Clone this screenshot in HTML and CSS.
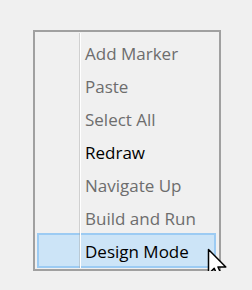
FILE: index.html
```html
<!DOCTYPE html>
<html lang="en">
<head>
    <meta charset="UTF-8">
    <title>Context Menu</title>
    <link rel="stylesheet" href="styles.css">
</head>
<body>
    <div class="menu">
        <div class="item disabled">Add Marker</div>
        <div class="item disabled">Paste</div>
        <div class="item disabled">Select All</div>
        <div class="item">Redraw</div>
        <div class="item disabled">Navigate Up</div>
        <div class="item disabled">Build and Run</div>
        <div class="item hover">Design Mode</div>
        <div class="gutter"></div>
        <svg class="cursor" width="21" height="32" viewBox="0 0 21 32">
            <path d="M1.5 1.5 L1.5 26 L7.2 20.3 L11.3 29.5 L15 27.8 L11 19 L18.8 19 Z" fill="#fff" stroke="#000" stroke-width="1.5" stroke-linejoin="round"/>
        </svg>
    </div>
</body>
</html>
```

FILE: styles.css
```css
body { margin: 0; background: #f0f0f0; font-family: "Open Sans", "Noto Sans", sans-serif; }
.menu { position: relative; margin: 30px 0 0 33px; width: 184px; border: 2px solid #a0a0a0; background: #f0f0f0; padding: 3px 0 1px; }
.gutter { position: absolute; left: 44px; top: 1px; bottom: 1px; width: 1px; border-right: 1px solid #fff; background: rgba(160, 160, 160, 0.4); }
.item { height: 33px; line-height: 37px; padding-left: 50px; font-size: 17px; color: #000; box-sizing: border-box; }
.item.disabled { color: #6d6d6d; }
.item.hover { height: 35px; margin: 0 3px 0 2px; padding-left: 46px; background: #cce4f7; border: 2px solid #9ccbf3; line-height: 33px; }
.cursor { position: absolute; left: 172px; top: 216px; }
```
